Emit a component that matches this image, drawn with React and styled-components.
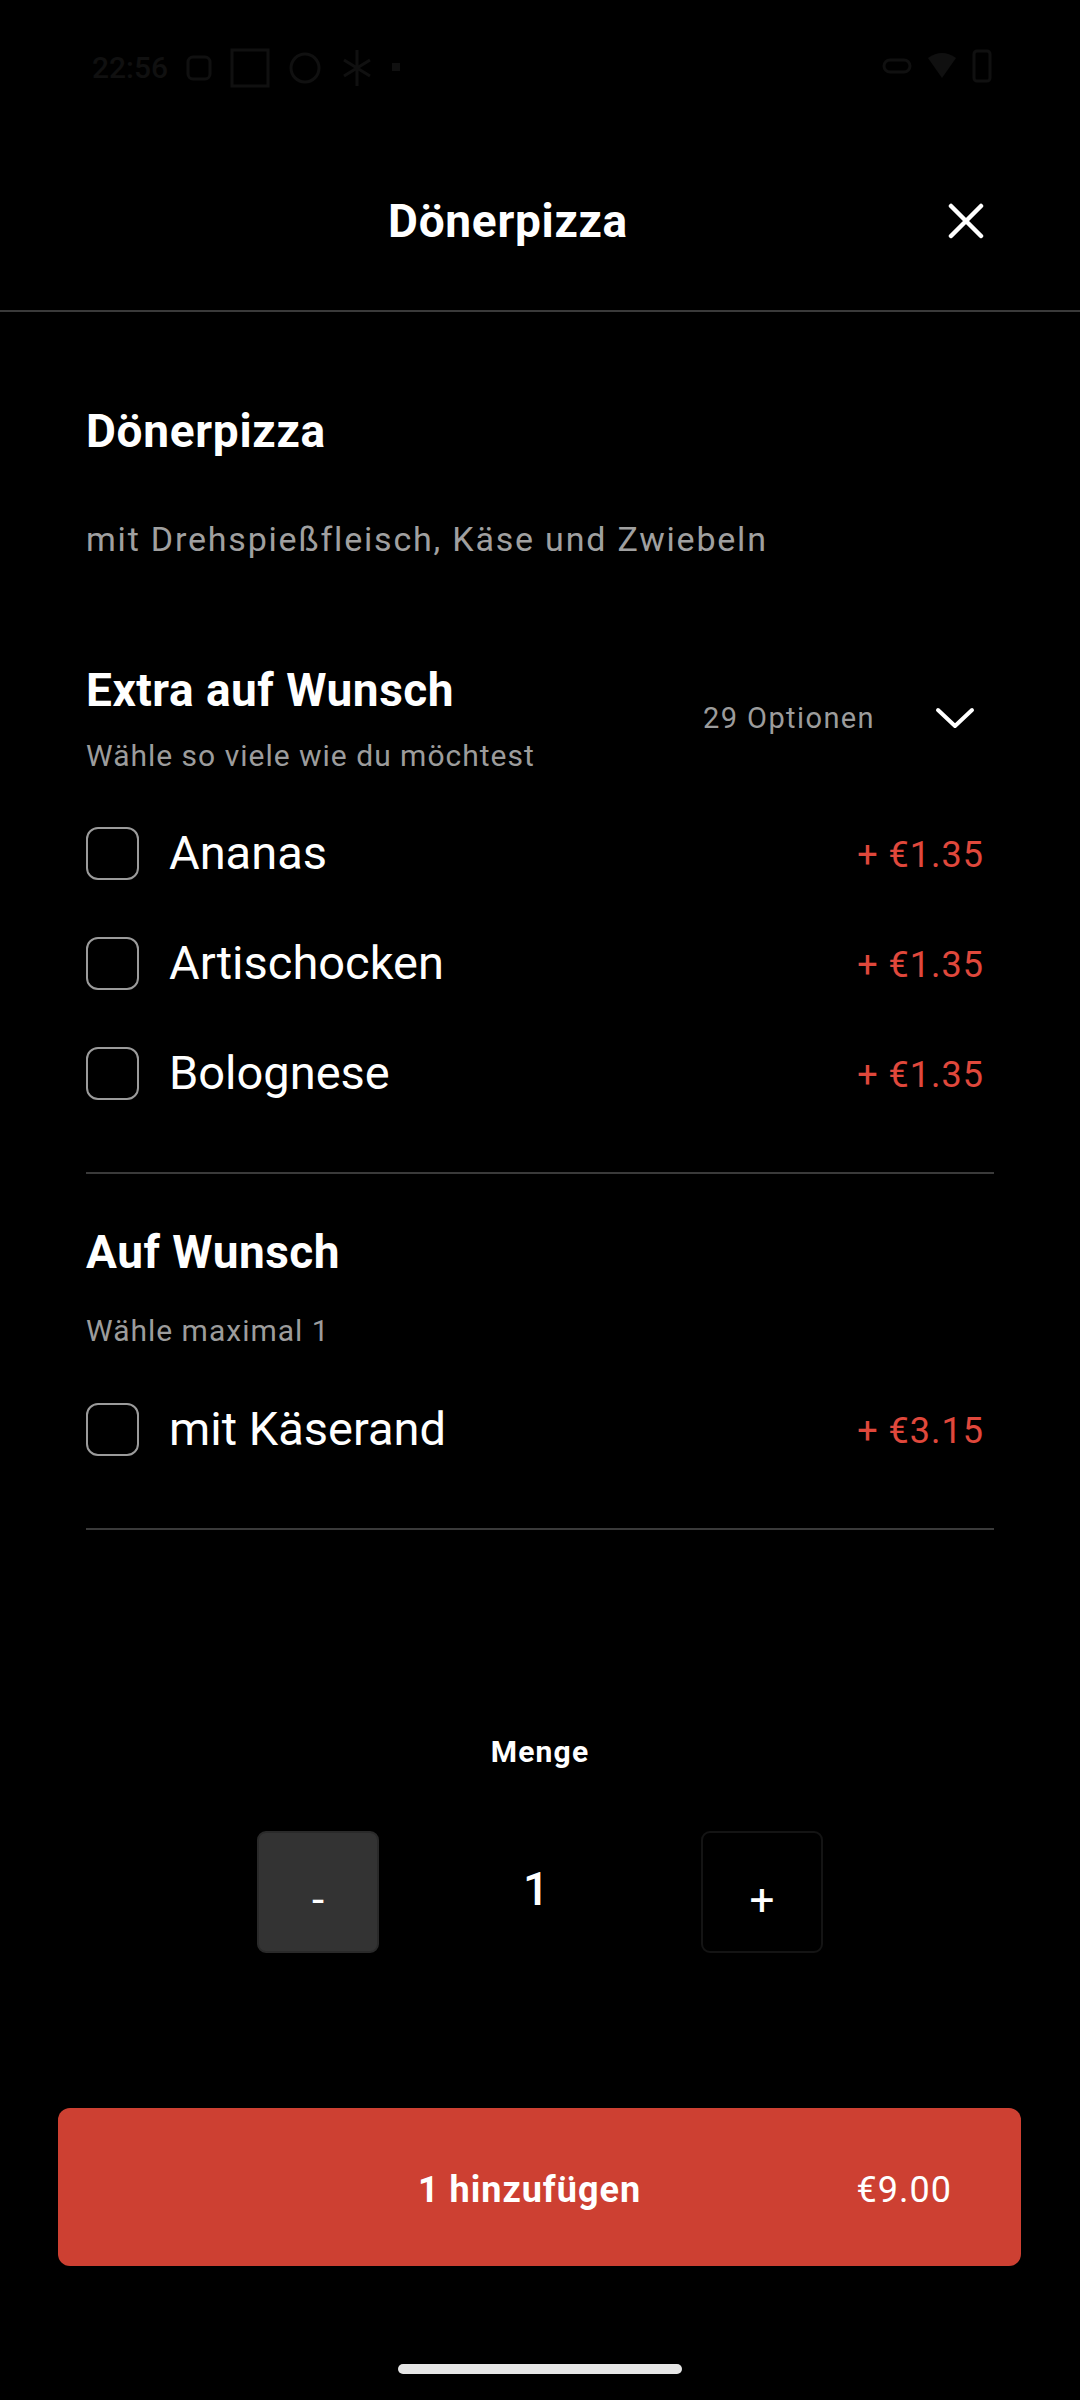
import React from "react";
import styled, { createGlobalStyle } from "styled-components";

const Global = createGlobalStyle`
  html, body { margin: 0; padding: 0; background: #000; }
  body { font-family: Roboto, "Liberation Sans", Arial, sans-serif; color: #fff; }
  * { box-sizing: border-box; }
`;

const Page = styled.div`
  width: 1080px;
  min-height: 2400px;
  background: #000;
  display: flex;
  flex-direction: column;
`;

const StatusBar = styled.div`
  height: 132px;
  padding: 48px 88px 0 92px;
  display: flex;
  align-items: flex-start;
  justify-content: space-between;
  color: #101010;
`;

const StatusLeft = styled.div`
  display: flex;
  align-items: center;
  gap: 18px;
  font-size: 30px;
  font-weight: 500;
  line-height: 36px;
`;

const StatusRight = styled.div`
  display: flex;
  align-items: center;
  gap: 14px;
  height: 36px;
`;

const Header = styled.header`
  height: 180px;
  display: flex;
  align-items: center;
  padding-left: 78px;
  border-bottom: 2px solid #3a3a3a;
`;

const HeaderTitle = styled.h1`
  flex: 1;
  margin: 0;
  text-align: center;
  font-size: 46px;
  font-weight: 700;
  letter-spacing: 0.7px;
  line-height: 56px;
  color: #fff;
`;

const CloseButton = styled.button`
  flex: 0 0 56px;
  margin-right: 86px;
  width: 56px;
  height: 56px;
  padding: 0;
  border: none;
  background: transparent;
  display: flex;
  align-items: center;
  justify-content: center;
`;

const Content = styled.main`
  padding: 0 86px;
  display: flex;
  flex-direction: column;
`;

const ProductTitle = styled.h2`
  margin: 91px 0 0;
  font-size: 46px;
  font-weight: 700;
  letter-spacing: 0.7px;
  line-height: 56px;
`;

const Description = styled.p`
  margin: 60px 0 0;
  font-size: 34px;
  letter-spacing: 1.8px;
  line-height: 40px;
  color: #a0a0a0;
`;

const Section = styled.section`
  margin-top: ${(p) => p.$top}px;
  padding-bottom: ${(p) => (p.$divider ? 44 : 0)}px;
  border-bottom: ${(p) => (p.$divider ? "2px solid #3a3a3a" : "none")};
`;

const SectionHead = styled.div`
  display: flex;
  align-items: center;
  justify-content: space-between;
`;

const HeadText = styled.div`
  display: flex;
  flex-direction: column;
  gap: ${(p) => p.$gap}px;
`;

const SectionTitle = styled.h3`
  margin: 0;
  font-size: 46px;
  font-weight: 700;
  letter-spacing: 0.5px;
  line-height: 56px;
`;

const SectionHint = styled.div`
  font-size: 30px;
  letter-spacing: 1px;
  line-height: 36px;
  color: #9c9c9c;
`;

const HeadMeta = styled.div`
  display: flex;
  align-items: center;
  gap: 60px;
  padding-right: 19px;
`;

const Count = styled.span`
  font-size: 29px;
  letter-spacing: 1.4px;
  line-height: 36px;
  color: #9c9c9c;
`;

const Options = styled.ul`
  list-style: none;
  margin: ${(p) => p.$top}px 0 0;
  padding: 0;
`;

const OptionRow = styled.li`
  height: 110px;
  display: flex;
  align-items: center;
  padding-right: 10px;
`;

const Box = styled.span`
  width: 53px;
  height: 53px;
  flex: 0 0 53px;
  border: 2px solid #9b9b9b;
  border-radius: 12px;
`;

const OptionLabel = styled.span`
  margin-left: 30px;
  flex: 1;
  font-size: 47px;
  line-height: 56px;
  color: #fff;
`;

const Price = styled.span`
  font-size: 36px;
  letter-spacing: 1px;
  line-height: 44px;
  padding-top: 4px;
  color: #e0483c;
`;

const Quantity = styled.div`
  margin-top: 204px;
  display: flex;
  flex-direction: column;
  align-items: center;
`;

const QtyLabel = styled.div`
  font-size: 30px;
  font-weight: 700;
  letter-spacing: 1.2px;
  line-height: 36px;
`;

const QtyRow = styled.div`
  margin-top: 61px;
  display: flex;
  align-items: center;
  gap: 110px;
`;

const StepButton = styled.button`
  width: 122px;
  height: 122px;
  border-radius: 9px;
  border: 2px solid ${(p) => (p.$filled ? "#2a2a2a" : "#141414")};
  background: ${(p) => (p.$filled ? "#333333" : "#000")};
  color: #fff;
  font-family: Roboto, "Liberation Sans", sans-serif;
  font-size: 44px;
  line-height: 1;
  padding: 16px 0 0;
  display: flex;
  align-items: center;
  justify-content: center;
`;

const QtyValue = styled.div`
  width: 110px;
  text-align: center;
  font-size: 46px;
  font-weight: 500;
  line-height: 56px;
  margin: -6px 0 0 -8px;
`;

const AddButton = styled.button`
  margin: 155px 59px 0 58px;
  height: 158px;
  border: none;
  border-radius: 12px;
  background: #cd4032;
  color: #fff;
  font-family: Roboto, "Liberation Sans", sans-serif;
  display: grid;
  grid-template-columns: 1fr auto 1fr;
  align-items: center;
  padding: 6px 69px 0;
`;

const AddLabel = styled.span`
  grid-column: 2;
  margin-right: 20px;
  font-size: 36px;
  font-weight: 700;
  letter-spacing: 1px;
`;

const AddPrice = styled.span`
  grid-column: 3;
  justify-self: end;
  font-size: 36px;
  font-weight: 400;
  letter-spacing: 1px;
`;

const HomeBar = styled.div`
  margin: 98px auto 27px;
  width: 284px;
  height: 10px;
  border-radius: 5px;
  background: #e6e6e6;
`;

const Chevron = () => (
  <svg width="40" height="24" viewBox="0 0 40 24" fill="none">
    <path d="M3 4 L20 20 L37 4" stroke="#fff" strokeWidth="4" strokeLinecap="round" strokeLinejoin="round" />
  </svg>
);

const CloseIcon = () => (
  <svg width="36" height="36" viewBox="0 0 36 36" fill="none">
    <path d="M3 3 L33 33 M33 3 L3 33" stroke="#fff" strokeWidth="4.5" strokeLinecap="round" />
  </svg>
);

const StatusIcons = () => (
  <StatusRight>
    <svg width="30" height="20" viewBox="0 0 30 20"><rect x="2" y="4" width="26" height="12" rx="6" fill="none" stroke="#101010" strokeWidth="3" /></svg>
    <svg width="32" height="28" viewBox="0 0 32 28"><path d="M2 6 Q16 -4 30 6 L16 26 Z" fill="#101010" /></svg>
    <svg width="20" height="34" viewBox="0 0 20 34"><rect x="2" y="2" width="16" height="30" rx="3" fill="none" stroke="#101010" strokeWidth="3" /></svg>
  </StatusRight>
);

const extras = [
  { name: "Ananas", price: "+ €1.35" },
  { name: "Artischocken", price: "+ €1.35" },
  { name: "Bolognese", price: "+ €1.35" },
];

const optional = [{ name: "mit Käserand", price: "+ €3.15" }];

function OptionList({ items, top }) {
  return (
    <Options $top={top}>
      {items.map((it) => (
        <OptionRow key={it.name}>
          <Box />
          <OptionLabel>{it.name}</OptionLabel>
          <Price>{it.price}</Price>
        </OptionRow>
      ))}
    </Options>
  );
}

export default function App() {
  return (
    <Page>
      <Global />
      <StatusBar>
        <StatusLeft>
          <span>22:56</span>
          <svg width="26" height="30" viewBox="0 0 26 30"><rect x="2" y="4" width="22" height="22" rx="5" fill="none" stroke="#101010" strokeWidth="3" /></svg>
          <svg width="40" height="40" viewBox="0 0 40 40"><rect x="2" y="2" width="36" height="36" fill="none" stroke="#101010" strokeWidth="3" /></svg>
          <svg width="34" height="36" viewBox="0 0 34 36"><circle cx="17" cy="18" r="14" fill="none" stroke="#101010" strokeWidth="3" /></svg>
          <svg width="34" height="40" viewBox="0 0 34 40"><path d="M17 2 L17 38 M4 12 L30 28 M4 28 L30 12" stroke="#101010" strokeWidth="3" /></svg>
          <svg width="10" height="10" viewBox="0 0 10 10"><rect width="8" height="8" fill="#101010" /></svg>
        </StatusLeft>
        <StatusIcons />
      </StatusBar>

      <Header>
        <HeaderTitle>Dönerpizza</HeaderTitle>
        <CloseButton aria-label="Schließen">
          <CloseIcon />
        </CloseButton>
      </Header>

      <Content>
        <ProductTitle>Dönerpizza</ProductTitle>
        <Description>mit Drehspießfleisch, Käse und Zwiebeln</Description>

        <Section $top={103} $divider>
          <SectionHead>
            <HeadText $gap={20}>
              <SectionTitle>Extra auf Wunsch</SectionTitle>
              <SectionHint>Wähle so viele wie du möchtest</SectionHint>
            </HeadText>
            <HeadMeta>
              <Count>29 Optionen</Count>
              <Chevron />
            </HeadMeta>
          </SectionHead>
          <OptionList items={extras} top={24} />
        </Section>

        <Section $top={50} $divider>
          <SectionHead>
            <HeadText $gap={33}>
              <SectionTitle>Auf Wunsch</SectionTitle>
              <SectionHint>Wähle maximal 1</SectionHint>
            </HeadText>
          </SectionHead>
          <OptionList items={optional} top={25} />
        </Section>

        <Quantity>
          <QtyLabel>Menge</QtyLabel>
          <QtyRow>
            <StepButton $filled aria-label="weniger">-</StepButton>
            <QtyValue>1</QtyValue>
            <StepButton aria-label="mehr">+</StepButton>
          </QtyRow>
        </Quantity>
      </Content>

      <AddButton>
        <AddLabel>1 hinzufügen</AddLabel>
        <AddPrice>€9.00</AddPrice>
      </AddButton>

      <HomeBar />
    </Page>
  );
}
